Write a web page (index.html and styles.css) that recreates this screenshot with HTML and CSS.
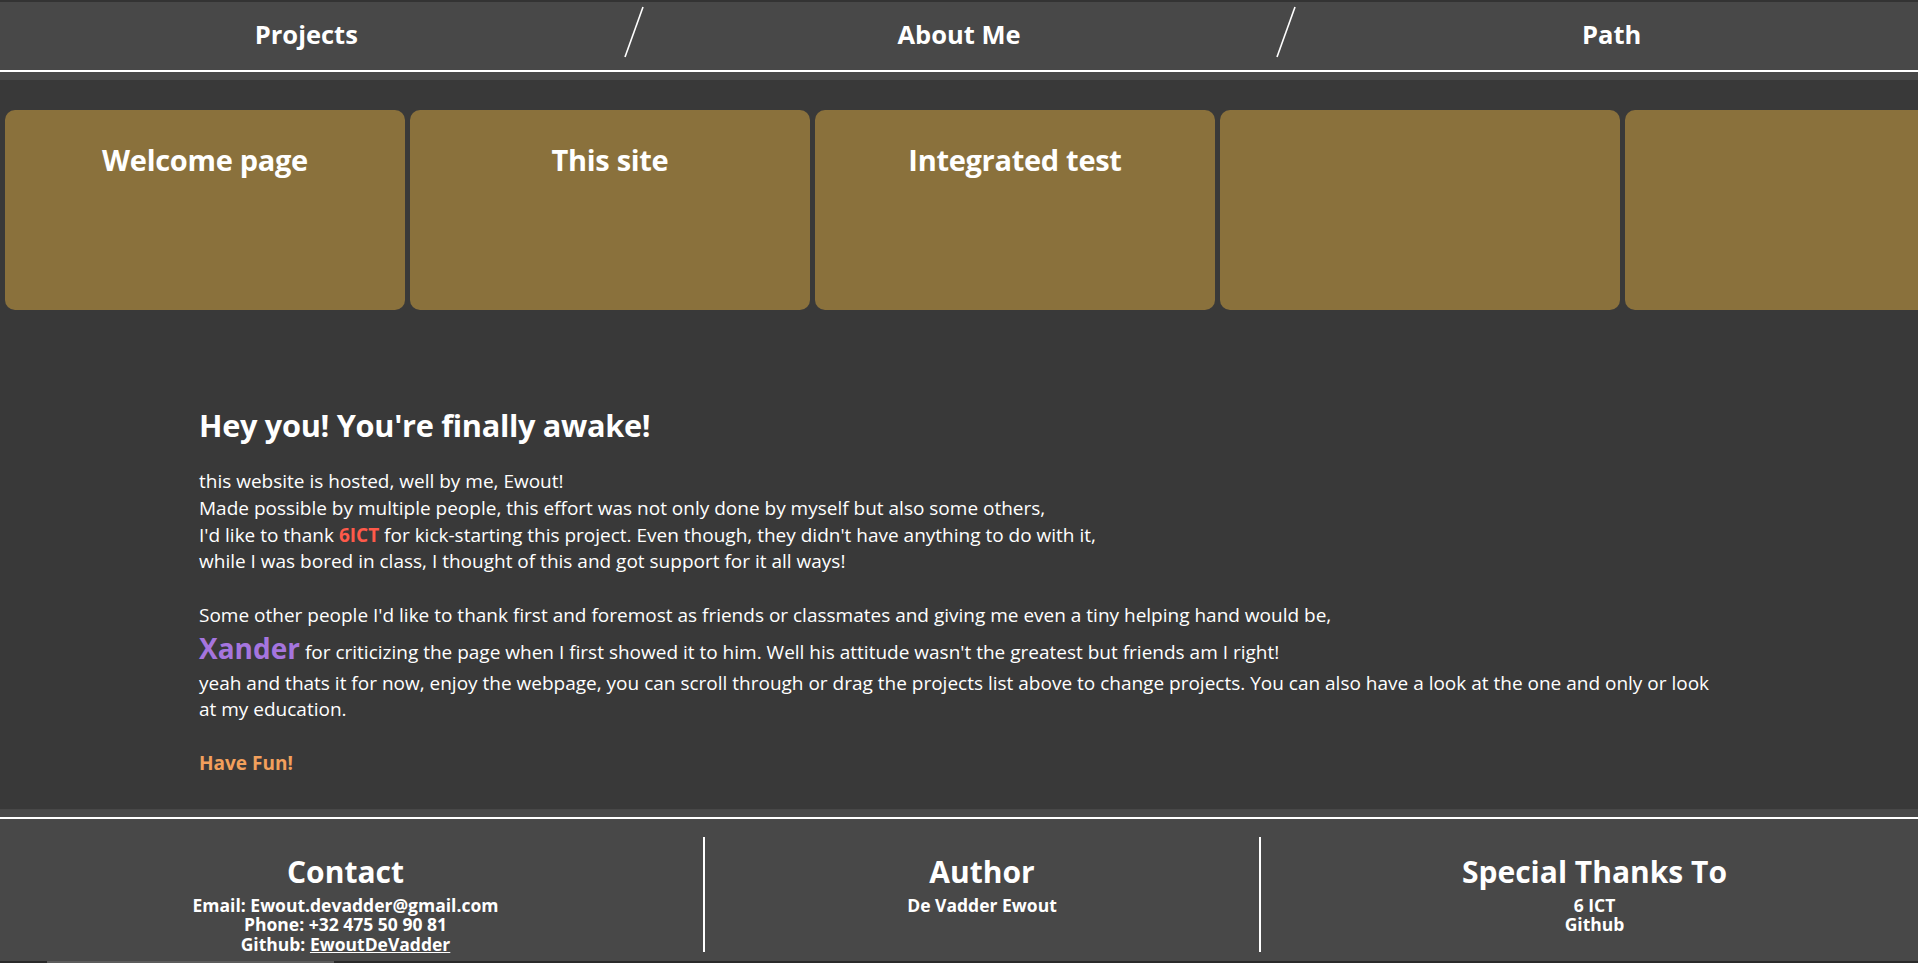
FILE: index.html
```html
<!DOCTYPE html>
<html lang="en">
<head>
<meta charset="utf-8">
<title>Ewout De Vadder</title>
<link rel="stylesheet" href="styles.css">
</head>
<body>
<header class="topbar">
  <nav class="nav">
    <a class="nav-item" href="#projects">Projects</a>
    <span class="nav-slash"><svg width="40" height="68" viewBox="0 0 40 68"><line x1="30" y1="5" x2="12" y2="55" stroke="#ffffff" stroke-width="1.6"/></svg></span>
    <a class="nav-item" href="#about">About Me</a>
    <span class="nav-slash"><svg width="40" height="68" viewBox="0 0 40 68"><line x1="30" y1="5" x2="12" y2="55" stroke="#ffffff" stroke-width="1.6"/></svg></span>
    <a class="nav-item" href="#path">Path</a>
  </nav>
</header>

<section class="projects" id="projects">
  <div class="card"><h2 class="card-title">Welcome page</h2></div>
  <div class="card"><h2 class="card-title">This site</h2></div>
  <div class="card"><h2 class="card-title">Integrated test</h2></div>
  <div class="card"><h2 class="card-title"></h2></div>
  <div class="card"><h2 class="card-title"></h2></div>
</section>

<main class="intro" id="about">
  <h1 class="intro-title">Hey you! You're finally awake!</h1>
  <p class="intro-text">this website is hosted, well by me, Ewout!<br>
  Made possible by multiple people, this effort was not only done by myself but also some others,<br>
  I'd like to thank <span class="hl-red">6ICT</span> for kick-starting this project. Even though, they didn't have anything to do with it,<br>
  while I was bored in class, I thought of this and got support for it all ways!</p>
  <p class="intro-text">Some other people I'd like to thank first and foremost as friends or classmates and giving me even a tiny helping hand would be,<br>
  <span class="hl-purple">Xander</span> for criticizing the page when I first showed it to him. Well his attitude wasn't the greatest but friends am I right!<br>
  yeah and thats it for now, enjoy the webpage, you can scroll through or drag the projects list above to change projects. You can also have a look at the one and only or look at my education.</p>
  <p class="intro-text"><span class="hl-orange">Have Fun!</span></p>
</main>

<footer class="footer">
  <div class="footer-cols">
    <div class="footer-col footer-col-first">
      <h2 class="footer-title">Contact</h2>
      <p class="footer-line">Email: Ewout.devadder@gmail.com</p>
      <p class="footer-line">Phone: +32 475 50 90 81</p>
      <p class="footer-line">Github: <a class="footer-link" href="#">EwoutDeVadder</a></p>
    </div>
    <div class="footer-col footer-col-div">
      <h2 class="footer-title">Author</h2>
      <p class="footer-line">De Vadder Ewout</p>
    </div>
    <div class="footer-col footer-col-div footer-col-last">
      <h2 class="footer-title">Special Thanks To</h2>
      <p class="footer-line">6 ICT</p>
      <p class="footer-line">Github</p>
    </div>
  </div>
</footer>
<div class="bottom-strip"><div class="bottom-thumb"></div></div>
</body>
</html>
```

FILE: styles.css
```css
html, body {
  margin: 0;
  padding: 0;
}

body {
  background: #393939;
  color: #ffffff;
  font-family: "Open Sans", "Noto Sans", "Liberation Sans", sans-serif;
  overflow: hidden;
}

.topbar {
  background: #484848;
  border-top: 2px solid #333333;
  padding-bottom: 8px;
}

.nav {
  display: grid;
  grid-template-columns: 1fr 40px 1fr 40px 1fr;
  height: 68px;
  align-items: center;
  border-bottom: 2px solid #ffffff;
}

.nav-item {
  color: #ffffff;
  text-decoration: none;
  text-align: center;
  font-weight: 700;
  font-size: 25.5px;
  padding-bottom: 4px;
}

.nav-slash {
  display: flex;
  height: 68px;
}

.projects {
  display: flex;
  gap: 5px;
  padding: 30px 0 0 5px;
  overflow: hidden;
}

.card {
  flex: 0 0 400px;
  height: 200px;
  background: #8a713c;
  border-radius: 10px;
}

.card-title {
  margin: 0;
  padding-top: 31px;
  text-align: center;
  font-size: 29px;
  font-weight: 700;
  line-height: 1.333;
  letter-spacing: -0.3px;
}

.intro {
  padding: 95px 200px 32px 199px;
}

.intro-title {
  margin: 0 0 22.5px;
  font-size: 30.7px;
  line-height: 1.333;
  font-weight: 700;
  letter-spacing: -0.3px;
}

.intro-text {
  margin: 0 0 27.5px;
  font-size: 19px;
  line-height: 1.4;
}

.intro-text:last-child {
  margin-bottom: 0;
}

.hl-red {
  color: #ff5a4a;
  font-weight: 700;
}

.hl-purple {
  display: inline-block;
  margin-bottom: 1.5px;
  color: #a575de;
  font-weight: 700;
  font-size: 28px;
}

.hl-orange {
  color: #f2a05c;
  font-weight: 700;
}

.footer {
  background: #484848;
  padding-top: 8px;
}

.footer-cols {
  display: grid;
  grid-template-columns: 703fr 556fr 659fr;
  border-top: 2px solid #ffffff;
  padding: 18px 0 9px;
}

.footer-col {
  height: 115px;
  padding-top: 17px;
  box-sizing: border-box;
  text-align: center;
}

.footer-col-first {
  padding-right: 12px;
}

.footer-col-last {
  padding-left: 10px;
}

.footer-col-div {
  border-left: 2px solid #ffffff;
}

.footer-title {
  margin: 0 0 6px;
  font-size: 30px;
  line-height: 1.2;
  font-weight: 700;
}

.footer-line {
  margin: 0;
  font-size: 17.5px;
  line-height: 19.5px;
  font-weight: 700;
}

.footer-link {
  color: #ffffff;
  text-decoration: underline;
}

.bottom-strip {
  height: 2px;
  background: #2a2a2a;
  padding-left: 47px;
}

.bottom-thumb {
  width: 287px;
  height: 2px;
  background: #5c5c5c;
}
```
